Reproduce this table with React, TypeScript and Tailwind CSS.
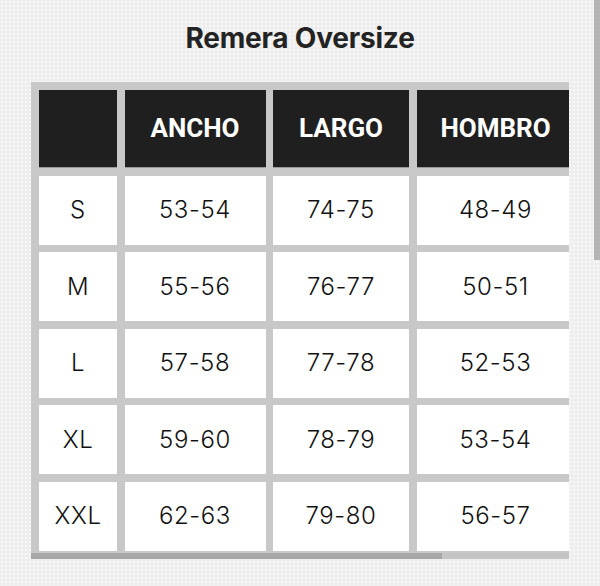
const headers = ['', 'ANCHO', 'LARGO', 'HOMBRO'];

const rows: string[][] = [
    ['S', '53-54', '74-75', '48-49'],
    ['M', '55-56', '76-77', '50-51'],
    ['L', '57-58', '77-78', '52-53'],
    ['XL', '59-60', '78-79', '53-54'],
    ['XXL', '62-63', '79-80', '56-57'],
];

const App = () => {
    return (
        <div className="relative w-[600px] h-[586px] overflow-hidden bg-[#eeeeee] bg-[radial-gradient(#f7f7f7_1px,transparent_1.2px)] bg-[size:4px_4px]">
            <h1 className="pt-[20px] h-[82px] text-center text-[28px] leading-[36px] font-bold text-[#232323] font-['Inter',sans-serif] tracking-[-0.2px]">
                Remera Oversize
            </h1>
            <div className="ml-[31px] w-[538px] overflow-hidden bg-[#c8c8c8]">
                <div className="w-max pl-[8px] pt-[8px] pb-[2px] grid grid-cols-[78px_141px_136px_158px] grid-rows-[78px_69px_69px_69px_69px_69px] gap-x-[7.5px] gap-y-[7.5px]">
                    {headers.map((h, i) => (
                        <div
                            key={'h' + i}
                            className="flex items-center justify-center bg-[#1f1f1f] border-b border-[#9a9a9a] text-white text-[26px] font-bold font-['Roboto',sans-serif]"
                        >
                            {h}
                        </div>
                    ))}
                    {rows.map((row) =>
                        row.map((cell, j) => (
                            <div
                                key={row[0] + j}
                                className="flex items-center justify-center bg-white text-[#111111] text-[24px] font-light font-['Inter',sans-serif] tracking-[0.6px]"
                            >
                                {cell}
                            </div>
                        ))
                    )}
                </div>
                <div className="h-[6px] bg-[#c4c4c4]">
                    <div className="h-full w-[411px] bg-[#a6a6a6]"/>
                </div>
            </div>
            <div className="absolute right-0 top-0 w-[6px] h-[260px] bg-[#b4b4b4]"/>
        </div>
    );
};

export default App;
